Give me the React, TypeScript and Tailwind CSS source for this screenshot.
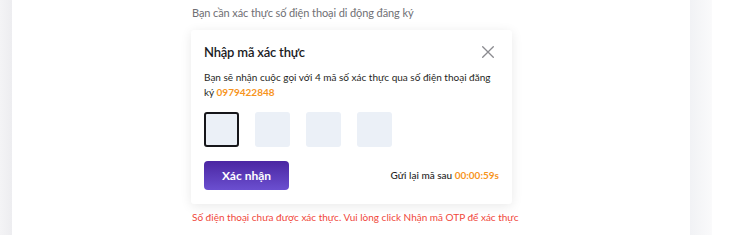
const font = { fontFamily: "Lato, 'Noto Sans', sans-serif" }

export default function App() {
  return (
    <div className="flex h-[235px] w-[740px] overflow-hidden bg-white" style={font}>
      {/* left gutter */}
      <div className="w-[12px] shrink-0 bg-gradient-to-r from-[#f4f4f6] to-[#ededf0]" />

      {/* main panel */}
      <div className="flex w-[678px] shrink-0 flex-col bg-white pl-[180px]">
        <p className="mt-[5px] text-[11px] leading-[16px] tracking-[-0.1px] text-[#6f6f74]">
          Bạn cần xác thực số điện thoại di động đăng ký
        </p>

        {/* OTP card */}
        <div className="mt-[9px] w-[321px] -ml-px rounded-[3px] bg-white px-[13px] pt-[11px] pb-[14px] shadow-[0_2px_12px_rgba(0,0,0,0.09)]">
          <div className="flex items-center justify-between">
            <h2 className="text-[13px] font-semibold leading-[22px] tracking-[-0.2px] text-[#1b1b1f]">Nhập mã xác thực</h2>
            <svg className="mr-[5px] h-[12px] w-[12px]" viewBox="0 0 12 12" fill="none" stroke="#8a8a8f" strokeWidth="1.3" strokeLinecap="round">
              <path d="M0.7 0.7 L11.3 11.3 M11.3 0.7 L0.7 11.3" />
            </svg>
          </div>
          <p className="mt-[7px] text-[10px] leading-[15px] text-[#1f1f24]">
            Bạn sẽ nhận cuộc gọi với 4 mã số xác thực qua số điện thoại đăng ký{" "}
            <span className="font-bold text-[#f7941d]">0979422848</span>
          </p>

          <div className="mt-[12px] flex gap-[16px]">
            <div className="h-[35px] w-[35px] rounded-[3px] border-2 border-[#16161a] bg-[#ebf0f7]" />
            <div className="h-[35px] w-[35px] rounded-[3px] bg-[#ebf0f7]" />
            <div className="h-[35px] w-[35px] rounded-[3px] bg-[#ebf0f7]" />
            <div className="h-[35px] w-[35px] rounded-[3px] bg-[#ebf0f7]" />
          </div>

          <div className="mt-[14px] flex items-center justify-between">
            <button className="h-[29px] w-[85px] rounded-[4px] bg-gradient-to-b from-[#4b25a2] to-[#6b4fd0] text-[12px] font-bold text-white">
              Xác nhận
            </button>
            <p className="text-[10px] font-medium text-[#1f1f24]">
              Gửi lại mã sau <span className="font-bold text-[#f7941d]">00:00:59s</span>
            </p>
          </div>
        </div>

        <p className="mt-[5px] text-[10px] leading-[16px] text-[#f0463a]">
          Số điện thoại chưa được xác thực. Vui lòng click Nhận mã OTP để xác thực
        </p>
      </div>

      {/* right gutter */}
      <div className="w-[22px] shrink-0 bg-gradient-to-r from-[#f1f2f5] to-[#fafafb]" />
      <div className="flex-1 bg-white" />
    </div>
  )
}
